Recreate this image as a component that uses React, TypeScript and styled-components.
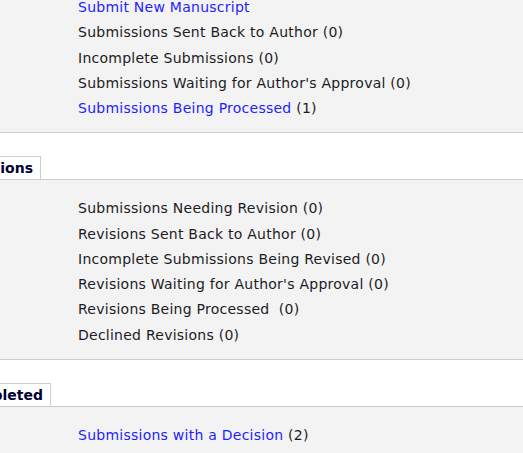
import React from 'react';
import styled, { createGlobalStyle } from 'styled-components';

const GlobalStyle = createGlobalStyle`
  html, body {
    margin: 0;
    padding: 0;
    background: #ffffff;
    overflow: hidden;
  }
  body {
    font-family: 'DejaVu Sans', Verdana, sans-serif;
    font-size: 14px;
    color: #1c1c24;
  }
`;

const Page = styled.div`
  width: 523px;
  height: 453px;
  overflow: hidden;
`;

const Scroller = styled.div`
  margin-top: -21px;
`;

const Panel = styled.div`
  background: #f3f3f3;
  border-bottom: 1px solid #cccccc;
  padding: 16px 0 11px 78px;
`;

const ItemList = styled.ul`
  list-style: none;
  margin: 0;
  padding: 0;
`;

const Item = styled.li`
  height: 25.25px;
  line-height: 25.25px;
  letter-spacing: 0.25px;
  white-space: pre;
`;

const Link = styled.a`
  color: #1f1fff;
  text-decoration: none;
`;

const Header = styled.div`
  display: flex;
  align-items: flex-end;
  height: 46px;
  background: #ffffff;
  border-bottom: 1px solid #cccccc;
`;

const Tab = styled.div<{ $width: number }>`
  display: flex;
  justify-content: flex-end;
  box-sizing: border-box;
  width: ${(p) => p.$width}px;
  height: 23px;
  padding-right: 7px;
  overflow: hidden;
  white-space: nowrap;
  border: 1px solid #cccccc;
  border-left: none;
  border-bottom: none;
  line-height: 23px;
  font-weight: bold;
  color: #000033;
`;

type Entry = { label: string; count: number; href?: boolean };

const sections: { tab?: string; tabWidth?: number; items: Entry[] }[] = [
  {
    items: [
      { label: 'Submit New Manuscript', count: -1, href: true },
      { label: 'Submissions Sent Back to Author', count: 0 },
      { label: 'Incomplete Submissions', count: 0 },
      { label: "Submissions Waiting for Author's Approval", count: 0 },
      { label: 'Submissions Being Processed', count: 1, href: true },
    ],
  },
  {
    tab: 'Revisions',
    tabWidth: 41,
    items: [
      { label: 'Submissions Needing Revision', count: 0 },
      { label: 'Revisions Sent Back to Author', count: 0 },
      { label: 'Incomplete Submissions Being Revised', count: 0 },
      { label: "Revisions Waiting for Author's Approval", count: 0 },
      { label: 'Revisions Being Processed ', count: 0 },
      { label: 'Declined Revisions', count: 0 },
    ],
  },
  {
    tab: 'Completed',
    tabWidth: 51,
    items: [{ label: 'Submissions with a Decision', count: 2, href: true }],
  },
];

const App = (): JSX.Element => {
  return (
    <Page>
      <GlobalStyle />
      <Scroller>
        {sections.map((section, i) => (
          <React.Fragment key={i}>
            {section.tab && (
              <Header>
                <Tab $width={section.tabWidth || 40}>
                  <span>{section.tab}</span>
                </Tab>
              </Header>
            )}
            <Panel>
              <ItemList>
                {section.items.map((item) => (
                  <Item key={item.label}>
                    {item.href ? <Link href='#'>{item.label}</Link> : item.label}
                    {item.count >= 0 && ` (${item.count})`}
                  </Item>
                ))}
              </ItemList>
            </Panel>
          </React.Fragment>
        ))}
      </Scroller>
    </Page>
  );
};

export default App;
